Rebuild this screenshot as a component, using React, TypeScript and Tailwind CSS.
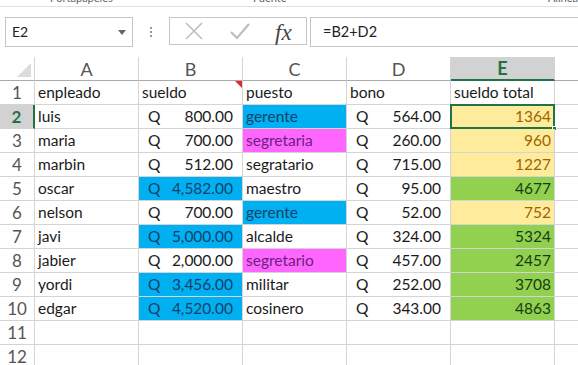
// Excel-style sheet: formula bar + employee salary grid

type Tone = 'blue' | 'pink' | 'yellow' | 'green' | undefined;

interface Row {
  name: string;
  sueldo: string;
  sueldoTone?: Tone;
  puesto: string;
  puestoTone?: Tone;
  bono: string;
  total: string;
  totalTone: Tone;
}

const ROWS: Row[] = [
  { name: 'luis', sueldo: '800.00', puesto: 'gerente', puestoTone: 'blue', bono: '564.00', total: '1364', totalTone: 'yellow' },
  { name: 'maria', sueldo: '700.00', puesto: 'segretaria', puestoTone: 'pink', bono: '260.00', total: '960', totalTone: 'yellow' },
  { name: 'marbin', sueldo: '512.00', puesto: 'segratario', bono: '715.00', total: '1227', totalTone: 'yellow' },
  { name: 'oscar', sueldo: '4,582.00', sueldoTone: 'blue', puesto: 'maestro', bono: '95.00', total: '4677', totalTone: 'green' },
  { name: 'nelson', sueldo: '700.00', puesto: 'gerente', puestoTone: 'blue', bono: '52.00', total: '752', totalTone: 'yellow' },
  { name: 'javi', sueldo: '5,000.00', sueldoTone: 'blue', puesto: 'alcalde', bono: '324.00', total: '5324', totalTone: 'green' },
  { name: 'jabier', sueldo: '2,000.00', puesto: 'segretario', puestoTone: 'pink', bono: '457.00', total: '2457', totalTone: 'green' },
  { name: 'yordi', sueldo: '3,456.00', sueldoTone: 'blue', puesto: 'militar', bono: '252.00', total: '3708', totalTone: 'green' },
  { name: 'edgar', sueldo: '4,520.00', sueldoTone: 'blue', puesto: 'cosinero', bono: '343.00', total: '4863', totalTone: 'green' },
];

const TONE_CLASS: Record<string, string> = {
  blue: 'bg-[#00b0f0] text-[#16406a]',
  pink: 'bg-[#ff66ff] text-[#6b1f7c]',
  yellow: 'bg-[#ffeb9c] text-[#9c6500]',
  green: 'bg-[#92d050] text-[#153d12]',
};

function tone(t: Tone) {
  return t ? TONE_CLASS[t] : 'bg-white text-[#1a1a1a]';
}

const cellBase = 'h-6 shrink-0 border-r border-b border-[#d4d4d4] flex items-center';

function RowHead({ n, active }: { n: number; active?: boolean }) {
  return (
    <div
      className={`${cellBase} w-[35px] justify-center text-[17px] ${
        active
          ? 'bg-[#d2d2d2] text-[#217346] font-bold border-r-[#217346] border-r-2'
          : 'bg-white text-[#555]'
      }`}
    >
      {n}
    </div>
  );
}

function Money({ value, t }: { value: string; t?: Tone }) {
  return (
    <div className={`${cellBase} w-[104px] justify-between pl-[9px] pr-[9px] ${tone(t)}`}>
      <span>Q</span>
      <span>{value}</span>
    </div>
  );
}

function Text({ value, t }: { value: string; t?: Tone }) {
  return <div className={`${cellBase} w-[104px] pl-[3px] ${tone(t)}`}>{value}</div>;
}

function Filler() {
  return <div className={`${cellBase} flex-1 border-r-0 bg-white`} />;
}

export default function App() {
  const cols = ['A', 'B', 'C', 'D', 'E'];

  return (
    <div
      className="w-[578px] h-[365px] overflow-hidden bg-white text-[15.5px] leading-none"
      style={{ fontFamily: "Lato, 'Open Sans', sans-serif" }}
    >
      {/* Ribbon group labels, mostly clipped as in the window */}
      <div className="h-[7px] overflow-hidden border-b border-[#e1e1e1] text-[11px] text-[#666]">
        <div className="flex -mt-[8px]">
          <span className="ml-[50px] w-[205px]">Portapapeles</span>
          <span className="w-[298px]">Fuente</span>
          <span>Alinea</span>
        </div>
      </div>

      {/* Formula bar */}
      <div className="h-[50px] flex items-start pt-[10px] bg-white">
        <div className="ml-[5px] w-[128px] h-[30px] border border-[#c6c6c6] flex items-center justify-between pl-[6px] pr-[6px] text-[14px] text-[#222]">
          <span>E2</span>
          <svg width="8" height="5" viewBox="0 0 8 5">
            <path d="M0 0 L8 0 L4 5 Z" fill="#666" />
          </svg>
        </div>
        <div className="w-[36px] h-[30px] flex flex-col items-center justify-center gap-[2px]">
          <span className="w-[2px] h-[2px] bg-[#999]" />
          <span className="w-[2px] h-[2px] bg-[#999]" />
          <span className="w-[2px] h-[2px] bg-[#999]" />
        </div>
        <div className="w-[138px] h-[28px] border border-[#c6c6c6] flex items-center pl-[14px]">
          <svg width="20" height="20" viewBox="0 0 20 20">
            <path d="M2 2 L18 18 M18 2 L2 18" stroke="#bdbdbd" strokeWidth="1.6" />
          </svg>
          <svg className="ml-[25px]" width="22" height="18" viewBox="0 0 22 18">
            <path d="M2 10 L8 16 L20 2" stroke="#bdbdbd" strokeWidth="2.2" fill="none" />
          </svg>
          <span
            className="ml-[24px] italic text-[23px] text-[#444] mt-[2px]"
            style={{ fontFamily: "'Liberation Serif', serif" }}
          >
            fx
          </span>
        </div>
        <div className="ml-[3px] flex-1 h-[30px] border border-[#c6c6c6] border-r-0 flex items-center pl-[12px] text-[14.5px] text-[#222]">
          =B2+D2
        </div>
      </div>

      {/* Column headers */}
      <div className="flex">
        <div className={`${cellBase} w-[35px] border-b-[#ababab] bg-white items-end justify-end pb-[3px] pr-[3px]`}>
          <svg width="14" height="14" viewBox="0 0 14 14">
            <path d="M14 0 L14 14 L0 14 Z" fill="#dcdcdc" />
          </svg>
        </div>
        {cols.map((c) => (
          <div
            key={c}
            className={`${cellBase} w-[104px] justify-center text-[18px] ${
              c === 'E'
                ? 'bg-[#d2d2d2] text-[#217346] font-bold border-b-2 border-b-[#217346]'
                : 'bg-white text-[#555] border-b-[#ababab]'
            }`}
          >
            {c}
          </div>
        ))}
        <div className={`${cellBase} flex-1 border-r-0 border-b-[#ababab]`} />
      </div>

      {/* Row 1: headings */}
      <div className="flex">
        <RowHead n={1} />
        <Text value="enpleado" />
        <div className={`${cellBase} w-[104px] pl-[3px] relative text-[#1a1a1a]`}>
          sueldo
          <svg className="absolute top-0 right-0" width="7" height="7" viewBox="0 0 7 7">
            <path d="M0 0 L7 0 L7 7 Z" fill="#e0282e" />
          </svg>
        </div>
        <Text value="puesto" />
        <Text value="bono" />
        <Text value="sueldo total" />
        <Filler />
      </div>

      {ROWS.map((r, i) => {
        const active = i === 0;
        return (
          <div key={r.name} className="flex">
            <RowHead n={i + 2} active={active} />
            <Text value={r.name} />
            <Money value={r.sueldo} t={r.sueldoTone} />
            <Text value={r.puesto} t={r.puestoTone} />
            <Money value={r.bono} />
            <div className={`${cellBase} w-[104px] justify-end pr-[3px] relative ${tone(r.totalTone)}`}>
              {r.total}
              {active && (
                <>
                  <div className="absolute -left-[1px] -top-[1px] w-[105px] h-[25px] border-2 border-[#217346]" />
                  <div className="absolute -right-[3px] -bottom-[3px] w-[5px] h-[5px] bg-[#217346] border border-white" />
                </>
              )}
            </div>
            <Filler />
          </div>
        );
      })}

      {[11, 12].map((n) => (
        <div key={n} className="flex">
          <RowHead n={n} />
          <Text value="" />
          <Text value="" />
          <Text value="" />
          <Text value="" />
          <Text value="" />
          <Filler />
        </div>
      ))}
    </div>
  );
}
